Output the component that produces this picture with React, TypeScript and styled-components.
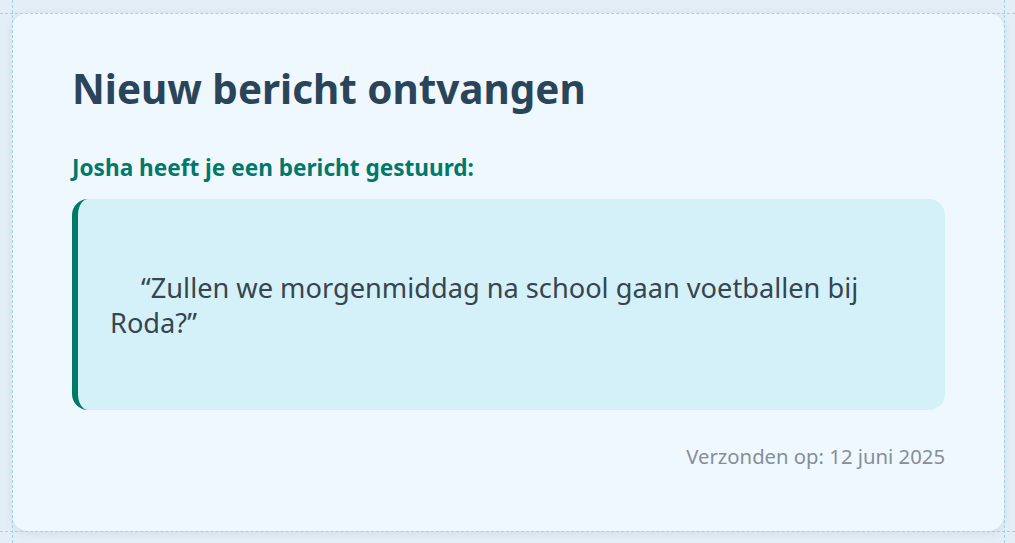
import React from "react";
import styled, { createGlobalStyle } from "styled-components";

const GlobalStyle = createGlobalStyle`
  html, body {
    margin: 0;
    padding: 0;
    background: #e4eef6;
    font-family: "Noto Sans", "Open Sans", sans-serif;
  }
`;

const Page = styled.div`
  padding: 13px 11px 12px 12px;
  box-sizing: border-box;
  min-height: 543px;
`;

const Card = styled.div`
  background: #f0f8ff;
  border-radius: 16px;
  box-shadow: 0 2px 10px rgba(60, 90, 120, 0.12);
  padding: 48px 59px 60px 60px;
  height: 518px;
  box-sizing: border-box;
  display: flex;
  flex-direction: column;
`;

const Title = styled.h1`
  margin: 0;
  font-size: 40.4px;
  font-weight: 700;
  line-height: 56px;
  color: #2a4459;
`;

const Sender = styled.p`
  margin: 36px 0 16px;
  font-size: 22.6px;
  font-weight: 700;
  color: #00796b;
  line-height: 30px;
`;

const Quote = styled.blockquote`
  margin: 0;
  background: #d4f1f9;
  border-left: 6px solid #00796b;
  border-radius: 16px;
  height: 211px;
  box-sizing: border-box;
  padding: 0 60px 0 32px;
  display: flex;
  align-items: center;
  font-size: 27.2px;
  line-height: 35px;
  color: #36454f;
`;

const QuoteText = styled.span`
  display: block;
  text-indent: 31px;
`;

const Meta = styled.p`
  margin: 32px 0 0;
  text-align: right;
  font-size: 20.3px;
  color: #868e98;
`;

const Guide = styled.div<{ $vertical?: boolean; $at: number }>`
  position: fixed;
  pointer-events: none;
  ${({ $vertical, $at }) =>
    $vertical
      ? `left: ${$at}px; top: 0; bottom: 0; width: 0; border-left: 1px dashed #9cd3f0;`
      : `top: ${$at}px; left: 0; right: 0; height: 0; border-top: 1px dashed #9cd3f0;`}
`;

export default function App() {
  return (
    <>
      <GlobalStyle />
      <Page>
        <Card>
          <Title>Nieuw bericht ontvangen</Title>
          <Sender>Josha heeft je een bericht gestuurd:</Sender>
          <Quote>
            <QuoteText>
              “Zullen we morgenmiddag na school gaan voetballen bij Roda?”
            </QuoteText>
          </Quote>
          <Meta>Verzonden op: 12 juni 2025</Meta>
        </Card>
      </Page>
      <Guide $vertical $at={12} />
      <Guide $vertical $at={1004} />
      <Guide $at={13} />
      <Guide $at={531} />
    </>
  );
}
